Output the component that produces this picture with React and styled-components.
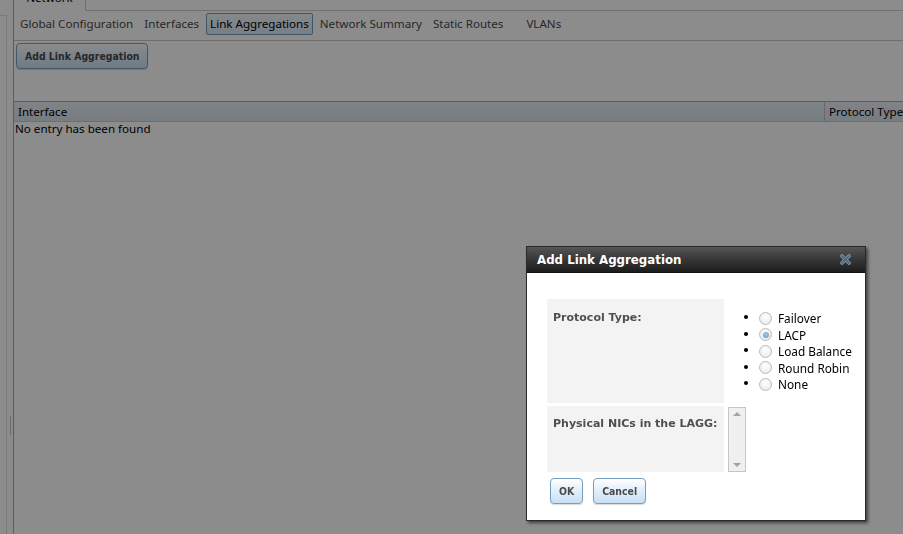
import React from "react";
import styled, { createGlobalStyle } from "styled-components";

const GlobalStyle = createGlobalStyle`
  html, body {
    margin: 0;
    padding: 0;
    background: #fff;
    overflow: hidden;
  }
  body {
    font-family: "Noto Sans", "DejaVu Sans", sans-serif;
    font-size: 11.6px;
    color: #333;
  }
`;

const Page = styled.div`
  display: flex;
  height: 534px;
`;

const LeftPane = styled.div`
  width: 7px;
  box-sizing: border-box;
  margin-top: 15px;
  border-top: 1px solid #ddd;
  border-right: 1px solid #dcdcdc;
`;

const Splitter = styled.div`
  width: 6px;
  display: flex;
  justify-content: center;
  padding-top: 416px;
  box-sizing: border-box;
`;

const Grip = styled.div`
  width: 1px;
  height: 19px;
  background: #c4c4c4;
`;

const Main = styled.div`
  flex: 1;
  min-width: 0;
  border-left: 1px solid #a9a9a9;
  display: flex;
  flex-direction: column;
`;

const TopTabs = styled.div`
  display: flex;
  margin-top: -14px;
  height: 24px;
  border-bottom: 1px solid #cdcdcd;
`;

const TopTab = styled.div`
  width: 72px;
  height: 25px;
  box-sizing: border-box;
  border-right: 1px solid #cdcdcd;
  background: #fff;
  text-align: center;
  line-height: 24px;
  color: #000;
`;

const SubTabs = styled.div`
  display: flex;
  padding: 2px 2px 5px;
  border-bottom: 1px solid #c8c8c8;
`;

const SubTab = styled.div`
  padding: 3px 3px;
  line-height: 14px;
  border: 1px solid ${(p) => (p.$active ? "#759dc0" : "transparent")};
  border-radius: 2px;
  background: ${(p) => (p.$active ? "linear-gradient(#f2f8fd, #dae8f5)" : "transparent")};
  color: ${(p) => (p.$active ? "#000" : "#494949")};
  margin-right: 3px;
  margin-left: ${(p) => p.$gap || 0}px;
  white-space: nowrap;
`;

const Toolbar = styled.div`
  padding: 2px 2px 0;
  height: 58px;
`;

const Button = styled.button`
  font-family: "DejaVu Sans Condensed", "DejaVu Sans", sans-serif;
  font-stretch: condensed;
  font-size: 10.4px;
  font-weight: bold;
  color: #4a4a4a;
  height: 26px;
  padding: 0 ${(p) => p.$pad || 8}px;
  border: 1px solid #759dc0;
  border-radius: 4px;
  background: linear-gradient(#ffffff 0%, #e6f1fb 40%, #c8dff3 100%);
  box-shadow: 0 1px 1px rgba(0, 0, 0, 0.15);
  cursor: pointer;
`;

const GridHeader = styled.div`
  display: flex;
  height: 19px;
  border-top: 1px solid #a5aab0;
  border-bottom: 1px solid #c5cdd5;
  background: linear-gradient(#e9eff5, #d9e2eb);
  color: #000;
`;

const HeadCell = styled.div`
  line-height: 19px;
  padding-left: 4px;
  white-space: nowrap;
  overflow: hidden;
  ${(p) => (p.$grow ? "flex: 1;" : "width: 74px;")}
  ${(p) => (p.$divider ? "border-left: 1px solid #b8c0c8;" : "")}
`;

const EmptyNote = styled.div`
  padding: 0 1px;
  line-height: 14px;
  color: #000;
`;

const Underlay = styled.div`
  position: fixed;
  inset: 0;
  background: rgba(0, 0, 0, 0.45);
  z-index: 10;
`;

const Dialog = styled.div`
  position: absolute;
  left: 526px;
  top: 246px;
  width: 338px;
  border: 1px solid #2a2a2a;
  background: #fff;
  box-shadow: 2px 2px 3px rgba(0, 0, 0, 0.55);
  z-index: 11;
`;

const TitleBar = styled.div`
  display: flex;
  align-items: center;
  justify-content: space-between;
  height: 25px;
  padding: 0 14px 0 10px;
  background: linear-gradient(#565656, #3a3a3a 45%, #1c1c1c);
  border-bottom: 1px solid #111;
`;

const Title = styled.div`
  font-family: "DejaVu Sans", sans-serif;
  font-weight: bold;
  font-size: 11.8px;
  color: #fff;
`;

const DialogBody = styled.div`
  padding: 26px 12px 16px 20px;
`;

const FormTable = styled.div`
  display: grid;
  grid-template-columns: 177px auto;
  column-gap: 4px;
  row-gap: 3px;
`;

const Label = styled.div`
  background: #f3f3f3;
  padding: ${(p) => p.$top || 12}px 6px 0;
  font-family: "DejaVu Sans", sans-serif;
  font-weight: bold;
  font-size: 11px;
  color: #4f4f4f;
  height: ${(p) => p.$h}px;
  box-sizing: border-box;
`;

const Choices = styled.ul`
  margin: 9px 0 0;
  padding: 0 0 0 31px;
  list-style: disc;
  color: #000;
  font-size: 11.8px;
`;

const Choice = styled.li`
  height: 16.5px;
  line-height: 16px;
  &::marker {
    font-size: 11px;
  }
`;

const ChoiceRow = styled.span`
  display: inline-flex;
  align-items: center;
  gap: 6px;
`;

const Radio = styled.span`
  width: 11px;
  height: 11px;
  border-radius: 50%;
  border: 1px solid #b9b9b9;
  background: radial-gradient(circle at 50% 35%, #ffffff, #e6e6e6);
  display: inline-flex;
  align-items: center;
  justify-content: center;
  &::after {
    content: "";
    width: 6px;
    height: 6px;
    border-radius: 50%;
    background: ${(p) => (p.$checked ? "radial-gradient(circle at 50% 40%, #a9c9e8, #5f94c7)" : "transparent")};
  }
`;

const MultiSelect = styled.div`
  width: 16px;
  height: 55px;
  border: 1px solid #c6c6c6;
  background: #f0f0f0;
  display: flex;
  flex-direction: column;
  justify-content: space-between;
  align-items: center;
  padding: 4px 0;
  box-sizing: content-box;
  margin-top: 1px;
`;

const Arrow = styled.span`
  width: 0;
  height: 0;
  border-left: 4px solid transparent;
  border-right: 4px solid transparent;
  ${(p) => (p.$down ? "border-top: 4px solid #a3a3a3;" : "border-bottom: 4px solid #a3a3a3;")}
`;

const Actions = styled.div`
  display: flex;
  gap: 10px;
  padding: 6px 0 0 3px;
`;

const CloseIcon = () => (
  <svg width="11" height="11" viewBox="0 0 11 11">
    <path d="M2 2 L9 9 M9 2 L2 9" stroke="#8596a7" strokeWidth="3.6" strokeLinecap="round" />
    <path d="M2 2 L9 9 M9 2 L2 9" stroke="#55687b" strokeWidth="1.8" strokeLinecap="round" />
  </svg>
);

const subTabs = [
  { label: "Global Configuration" },
  { label: "Interfaces" },
  { label: "Link Aggregations", active: true },
  { label: "Network Summary" },
  { label: "Static Routes" },
  { label: "VLANs", gap: 12 },
];

const protocols = [
  { label: "Failover" },
  { label: "LACP", checked: true },
  { label: "Load Balance" },
  { label: "Round Robin" },
  { label: "None" },
];

export default function App() {
  return (
    <>
      <GlobalStyle />
      <Page>
        <LeftPane />
        <Splitter>
          <Grip />
        </Splitter>
        <Main>
          <TopTabs>
            <TopTab>Network</TopTab>
          </TopTabs>
          <SubTabs>
            {subTabs.map((t) => (
              <SubTab key={t.label} $active={t.active} $gap={t.gap}>
                {t.label}
              </SubTab>
            ))}
          </SubTabs>
          <Toolbar>
            <Button>Add Link Aggregation</Button>
          </Toolbar>
          <GridHeader>
            <HeadCell $grow>Interface</HeadCell>
            <HeadCell $divider>Protocol Type</HeadCell>
          </GridHeader>
          <EmptyNote>No entry has been found</EmptyNote>
        </Main>
      </Page>

      <Underlay />

      <Dialog>
        <TitleBar>
          <Title>Add Link Aggregation</Title>
          <CloseIcon />
        </TitleBar>
        <DialogBody>
          <FormTable>
            <Label $h={104} $top={12}>Protocol Type:</Label>
            <Choices>
              {protocols.map((p) => (
                <Choice key={p.label}>
                  <ChoiceRow>
                    <Radio $checked={p.checked} />
                    {p.label}
                  </ChoiceRow>
                </Choice>
              ))}
            </Choices>
            <Label $h={66} $top={11}>Physical NICs in the LAGG:</Label>
            <MultiSelect>
              <Arrow />
              <Arrow $down />
            </MultiSelect>
          </FormTable>
          <Actions>
            <Button $pad={8}>OK</Button>
            <Button $pad={8}>Cancel</Button>
          </Actions>
        </DialogBody>
      </Dialog>
    </>
  );
}
